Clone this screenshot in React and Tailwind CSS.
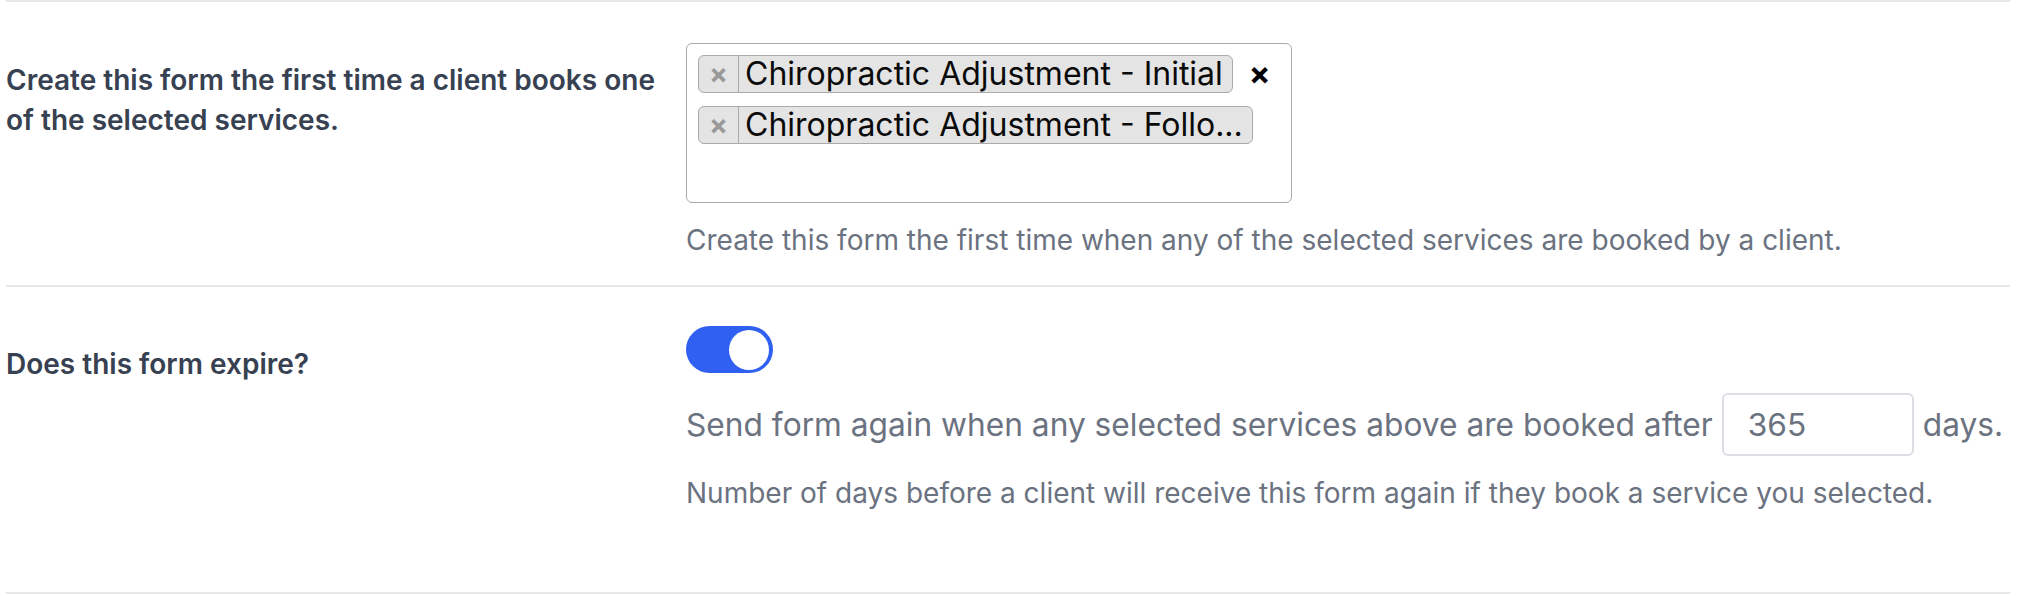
import { useState } from 'react'

function Tag({ children }) {
  return (
    <span className="inline-flex h-[38px] items-stretch overflow-hidden rounded-[6px] border border-[#aaaaaa] bg-[#e4e4e4]">
      <span className="flex w-[40px] items-center justify-center border-r border-[#aaaaaa] text-[28px] font-bold leading-none text-[#999999]">
        ×
      </span>
      <span className="flex items-center whitespace-nowrap pl-[6px] pr-[9px] text-[32px] leading-none text-[#0a0a0a]">
        {children}
      </span>
    </span>
  )
}

function Toggle({ on, onChange }) {
  return (
    <button
      type="button"
      onClick={() => onChange(!on)}
      className={`flex h-[47px] w-[87px] items-center rounded-full px-[4px] ${
        on ? 'justify-end bg-[#2f60f1]' : 'justify-start bg-[#d1d5db]'
      }`}
    >
      <span className="block h-[40px] w-[40px] rounded-full bg-white" />
    </button>
  )
}

export default function App() {
  const [expires, setExpires] = useState(true)
  const [days, setDays] = useState('365')

  return (
    <div className="min-h-[596px] bg-white font-['Inter','Noto_Sans',sans-serif]">
      <div className="pl-[6px] pr-[7px]">
        <section className="grid grid-cols-[680px_1fr] border-t-2 border-[#e5e7eb] pt-[41px] pb-[29px]">
          <p className="mt-[17px] pr-[20px] text-[28px] font-semibold leading-[40px] text-[#374151]">
            Create this form the first time a client books one of the selected services.
          </p>

          <div>
            <div className="h-[160px] w-[606px] rounded-[6px] border border-[#aaaaaa] px-[11px] pt-[11px]">
              <div className="flex flex-col items-start gap-[13px]">
                <div className="flex items-center gap-[16px]">
                  <Tag>Chiropractic Adjustment - Initial</Tag>
                  <span className="text-[32px] font-bold leading-none text-black">×</span>
                </div>
                <Tag>Chiropractic Adjustment - Follo...</Tag>
              </div>
            </div>
            <p className="mt-[21px] text-[28px] leading-[32px] text-[#6b7280]">
              Create this form the first time when any of the selected services are booked by a client.
            </p>
          </div>
        </section>

        <section className="grid grid-cols-[680px_1fr] border-t-2 border-b-2 border-[#e5e7eb] pt-[39px] pb-[83px]">
          <p className="mt-[18px] text-[28px] font-semibold leading-[40px] text-[#374151]">
            Does this form expire?
          </p>

          <div>
            <Toggle on={expires} onChange={setExpires} />
            <div className="mt-[20px] flex items-center gap-[9px] whitespace-nowrap text-[31.7px] text-[#6b7280]">
              <span>Send form again when any selected services above are booked after</span>
              <input
                value={days}
                onChange={(e) => setDays(e.target.value)}
                className="h-[63px] w-[192px] shrink-0 rounded-[6px] border-2 border-[#dcdee3] px-[24px] text-[31.7px] text-[#6b7280] outline-none"
              />
              <span>days.</span>
            </div>
            <p className="mt-[21px] text-[28px] leading-[32px] text-[#6b7280]">
              Number of days before a client will receive this form again if they book a service you selected.
            </p>
          </div>
        </section>
      </div>
    </div>
  )
}
